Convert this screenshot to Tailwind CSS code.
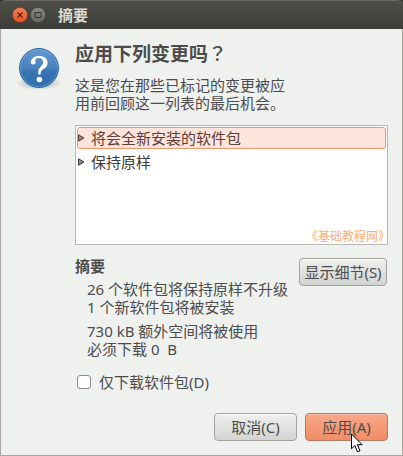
<!DOCTYPE html>
<html lang="zh-CN">
<head>
<meta charset="utf-8">
<meta name="viewport" content="width=device-width, initial-scale=1">
<title>摘要</title>
<script src="https://cdn.jsdelivr.net/npm/@tailwindcss/browser@4"></script>
</head>
<body class="flex min-h-screen flex-col bg-[#3c3b37] font-['Noto_Sans','Noto_Sans_CJK_SC',sans-serif] text-[15px] leading-[18px] text-[#4c4c4c]">
<header class="flex h-[29px] shrink-0 items-center gap-0.5 rounded-t-md border-t border-[#6a6963] bg-linear-to-b from-[#4f4e47] to-[#3c3d39] pb-px pl-3">
  <button type="button" aria-label="关闭" class="size-4">
    <svg viewBox="0 0 16 16" class="size-4"><defs><linearGradient id="close" x2="0" y2="1"><stop stop-color="#f5815a"/><stop offset="1" stop-color="#e8521c"/></linearGradient></defs><circle cx="8" cy="8" r="7.700" fill="url(#close)" stroke="#35342f" stroke-width=".6"/><path d="M5.500 5.500l5 5m0-5l-5 5" stroke="#5a2410" stroke-width="1.200"/></svg>
  </button>
  <button type="button" aria-label="最大化" class="size-4">
    <svg viewBox="0 0 16 16" class="size-4"><defs><linearGradient id="max" x2="0" y2="1"><stop stop-color="#8a8983"/><stop offset="1" stop-color="#66655e"/></linearGradient></defs><circle cx="8" cy="8" r="7.700" fill="url(#max)" stroke="#35342f" stroke-width=".6"/><path d="M5 5.500h6v5H5z" fill="none" stroke="#34332f"/></svg>
  </button>
  <h1 class="ml-2.5 font-bold text-[#dfdbd2]">摘要</h1>
</header>
<main class="flex grow gap-3.5 border border-t-0 border-[#aaa6a4] bg-[#eff1ee] pt-4 pr-3.5 pb-3.5 pl-4">
  <svg viewBox="0 0 44 44" class="mt-[2px] size-11 shrink-0" aria-hidden="true">
    <defs><linearGradient id="q" x2="0" y2="1"><stop stop-color="#659bd5"/><stop offset=".52" stop-color="#477fbd"/><stop offset=".55" stop-color="#3a75b5"/><stop offset="1" stop-color="#2c6da9"/></linearGradient>
    <radialGradient id="sh"><stop stop-color="#000" stop-opacity=".3"/><stop offset="1" stop-color="#000" stop-opacity=".03"/></radialGradient></defs>
    <ellipse cx="22" cy="36.500" rx="22" ry="6" fill="url(#sh)"/>
    <circle cx="22" cy="21" r="19.500" fill="url(#q)" stroke="#2d67a5"/>
    <circle cx="22" cy="21" r="18.500" fill="none" stroke="#80aedd" stroke-opacity=".5"/>
    <path d="M13.800 15.500C14 11.500 17.200 9 22 9c5.200 0 8.600 2.600 8.600 6.700 0 3.300-1.800 4.900-4.300 6.600-2.200 1.500-2.700 2.600-2.700 5.200h-2.300c-.4-4 .4-5.700 2.300-7.700 1.600-1.700 2.400-2.600 2.400-4.500 0-2.500-1.500-4.200-4-4.200-2.400 0-3.800 1-3.800 2.300 0 .9.500 1.200.5 2.100 0 1.200-1 2-2.400 2s-2.500-.7-2.500-2z" fill="#fff"/>
    <circle cx="22.400" cy="32.500" r="2.800" fill="#fff"/>
  </svg>
  <div class="flex min-w-0 grow flex-col">
    <h2 class="text-[19px] leading-[18px] font-bold">应用下列变更吗<span lang="zh-TW" class="font-['Noto_Sans_CJK_TC',sans-serif] leading-3 font-medium">？</span></h2>
    <p class="mt-[13px]">这是您在那些已标记的变更被应<br>用前回顾这一列表的最后机会。</p>
    <div class="mt-[13px] flex h-[120px] flex-col border border-[#bdb8b6] bg-[#fefffe] p-px text-[#3c3c3c]">
      <button type="button" aria-expanded="false" class="flex h-[22px] shrink-0 items-center gap-1.5 rounded-[3px] border border-[#f0956f] bg-[#ffe4dc] text-[#5a4039]">
        <svg viewBox="0 0 7 8" class="h-2 w-[7px]" aria-hidden="true"><path d="M.5.8L6 4 .5 7.200z" fill="#a5847a" stroke="#5a4039"/></svg>将会全新安装的软件包
      </button>
      <button type="button" aria-expanded="false" class="mt-px flex h-6 shrink-0 items-center gap-1.5 border border-transparent">
        <svg viewBox="0 0 7 8" class="h-2 w-[7px]" aria-hidden="true"><path d="M.5.8L6 4 .5 7.200z" fill="#8e8e8e" stroke="#3c3c3c"/></svg>保持原样
      </button>
      <span class="mt-auto self-end pr-0.5 text-xs leading-3 text-[#fbad76] [font-feature-settings:'halt']">《基础教程网》</span>
    </div>
    <section class="mt-3 flex items-start justify-between">
      <div>
        <h3 class="font-bold">摘要</h3>
        <p class="mt-[5px] pl-3 whitespace-nowrap">26 个软件包将保持原样不升级<br>1 个新软件包将被安装</p>
        <p class="mt-1.5 pl-3">730 kB 额外空间将被使用<br>必须下载 0&nbsp; B</p>
      </div>
      <button type="button" class="-ml-6 mt-px mr-px h-7 w-[88px] shrink-0 rounded border border-[#a6a39f] bg-linear-to-b from-[#f0f0ee] to-[#d2d4d1] whitespace-nowrap shadow-[inset_0_1px_#fafafa]">显示细节(S)</button>
    </section>
    <label class="mt-[15px] flex items-center gap-2 self-start pl-[2px]">
      <input type="checkbox" class="size-3.5 appearance-none rounded-[3px] border border-[#8d8a87] bg-[#fdfefd]">
      仅下载软件包(D)
    </label>
    <div class="mt-auto flex justify-end gap-2">
      <button type="button" class="h-7 w-[83px] rounded border border-[#a6a39f] bg-linear-to-b from-[#f0f0ee] to-[#d2d4d1] shadow-[inset_0_1px_#fafafa]">取消(C)</button>
      <button type="button" class="relative h-7 w-[83px] rounded border border-[#b17a64] bg-linear-to-b from-[#f8a888] to-[#f18c65] shadow-[inset_0_1px_#fbbda4]">应用(A)
        <svg viewBox="0 0 12 20" class="absolute top-[19px] left-[45px] h-5 w-3" aria-hidden="true"><path d="M.5 1v14.800l3.400-3.300 2.600 6.300 2.500-1-2.600-6.100h4.800z" fill="#fff" stroke="#000"/></svg>
      </button>
    </div>
  </div>
</main>
</body>
</html>
